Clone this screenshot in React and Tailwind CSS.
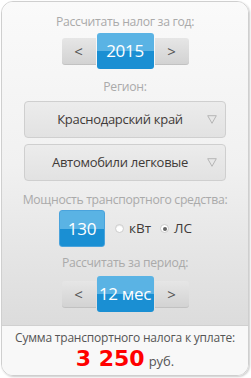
import React from "react";

const font = { fontFamily: '"Open Sans", "Liberation Sans", sans-serif' };

function Stepper({ value }) {
  return (
    <div className="flex items-center justify-center">
      <div className="w-[34px] h-[27px] flex items-center justify-center rounded-l-[3px] bg-gradient-to-b from-[#e6e6e6] to-[#d2d2d2] text-[#555] text-[15px] shadow-[inset_0_-1px_0_rgba(0,0,0,0.08)]">&lt;</div>
      <div className="w-[57px] h-[36px] mx-[1px] flex items-center justify-center rounded-[3px] bg-gradient-to-b from-[#5ab3e4] from-50% to-[#1a8fd3] to-50% text-white text-[17px] tracking-[-0.3px]">{value}</div>
      <div className="w-[34px] h-[27px] flex items-center justify-center rounded-r-[3px] bg-gradient-to-b from-[#e6e6e6] to-[#d2d2d2] text-[#555] text-[15px] shadow-[inset_0_-1px_0_rgba(0,0,0,0.08)]">&gt;</div>
    </div>
  );
}

function Select({ label }) {
  return (
    <div className="mx-[22px] h-[37px] relative flex items-center justify-center rounded-[4px] border border-[#cfcfcf] bg-gradient-to-b from-[#ececec] to-[#e2e2e2] text-[#3f3a38] text-[13px] tracking-[-0.3px]">
      <span className="pr-[10px]">{label}</span>
      <svg className="absolute right-[8px] top-[13px]" width="10" height="9" viewBox="0 0 10 9">
        <path d="M0.7 0.7 L9.3 0.7 L5 8.3 Z" fill="none" stroke="#b5b5b5" strokeWidth="1" />
      </svg>
    </div>
  );
}

const label = "text-center text-[12.2px] text-[#aaa] leading-[18px] tracking-[-0.3px]";

export default function App() {
  return (
    <div className="w-[251px] h-[378px] bg-white p-[1px]" style={font}>
      <div className="w-[248px] h-[375px] rounded-[12px] border border-[#cfcfcf] shadow-[1px_1px_2px_rgba(0,0,0,0.2)] overflow-hidden flex flex-col">
        <div className="h-[323px] shrink-0 bg-gradient-to-b from-[#fafafa] via-[#f1f1f1] to-[#dcdcdc] flex flex-col">
          <div className={`pt-[11px] ${label}`}>Рассчитать налог за год:</div>
          <div className="mt-[2px]"><Stepper value="2015" /></div>
          <div className={`mt-[9px] ${label}`}>Регион:</div>
          <div className="mt-[5px]"><Select label="Краснодарский край" /></div>
          <div className="mt-[6px]"><Select label="Автомобили легковые" /></div>
          <div className={`mt-[10px] ${label}`}>Мощность транспортного средства:</div>
          <div className="mt-[1px] flex items-center pl-[57px]">
            <div className="w-[46px] h-[37px] flex items-center justify-center rounded-[3px] border border-[#4aa3dc] bg-gradient-to-b from-[#5ab3e4] from-50% to-[#1a8fd3] to-50% text-white text-[17px] tracking-[-0.3px]">130</div>
            <div className="ml-[10px] flex items-center gap-[5px] text-[13.5px] text-[#3f3a38]">
              <span className="w-[9px] h-[9px] rounded-full bg-white border border-[#ccc] shadow-[inset_0_1px_1px_rgba(0,0,0,0.1)]"></span>
              <span>кВт</span>
            </div>
            <div className="ml-[9px] flex items-center gap-[5px] text-[13.5px] text-[#3f3a38]">
              <span className="w-[9px] h-[9px] rounded-full bg-white border border-[#ccc] flex items-center justify-center"><span className="w-[4px] h-[4px] rounded-full bg-[#666]"></span></span>
              <span>ЛС</span>
            </div>
          </div>
          <div className={`mt-[7px] ${label}`}>Рассчитать за период:</div>
          <div className="mt-[4px]"><Stepper value="12 мес" /></div>
        </div>
        <div className="flex-1 bg-[#f8f8f8] border-t border-[#d0d0d0] flex flex-col items-center">
          <div className="mt-[4px] text-[12px] text-[#555] leading-[16px] tracking-[-0.2px]">Сумма транспортного налога к уплате:</div>
          <div className="flex items-baseline gap-[4px] leading-[26px]">
            <span className="text-[22px] font-bold text-[#f00]" style={{ fontFamily: '"DejaVu Sans", sans-serif' }}>3 250</span>
            <span className="text-[13px] text-[#555]">руб.</span>
          </div>
        </div>
      </div>
    </div>
  );
}
